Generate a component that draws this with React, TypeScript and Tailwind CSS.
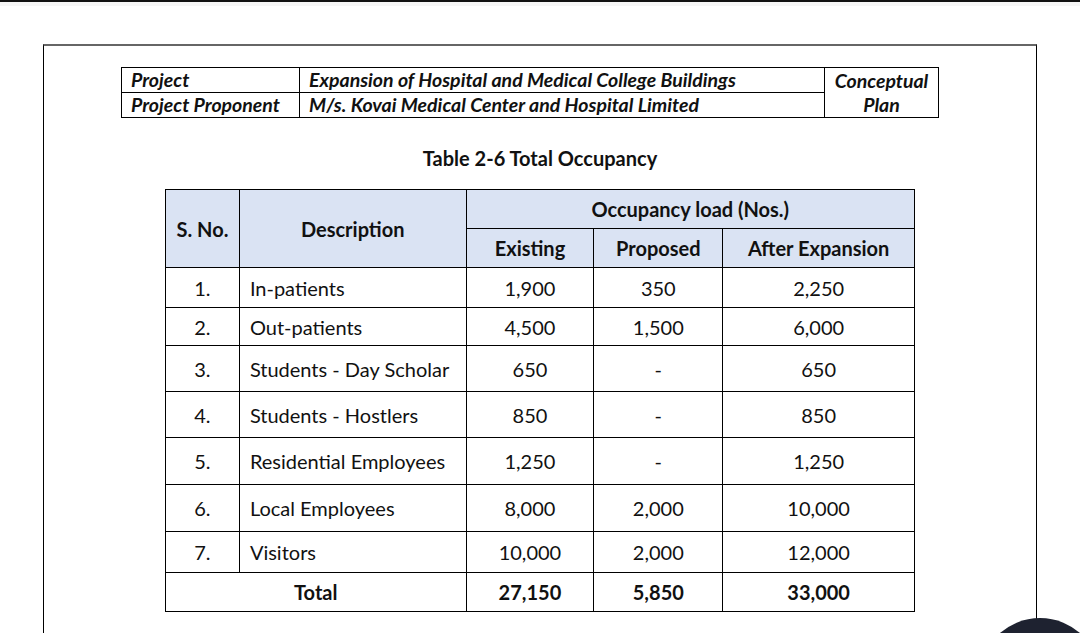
import React from "react";

type Row = {
  no: string;
  desc: string;
  existing: string;
  proposed: string;
  after: string;
  h: string;
};

const rows: Row[] = [
  { no: "1.", desc: "In-patients", existing: "1,900", proposed: "350", after: "2,250", h: "h-[40px]" },
  { no: "2.", desc: "Out-patients", existing: "4,500", proposed: "1,500", after: "6,000", h: "h-[38px]" },
  { no: "3.", desc: "Students - Day Scholar", existing: "650", proposed: "-", after: "650", h: "h-[46px]" },
  { no: "4.", desc: "Students - Hostlers", existing: "850", proposed: "-", after: "850", h: "h-[46px]" },
  { no: "5.", desc: "Residential Employees", existing: "1,250", proposed: "-", after: "1,250", h: "h-[47px]" },
  { no: "6.", desc: "Local Employees", existing: "8,000", proposed: "2,000", after: "10,000", h: "h-[47px]" },
  { no: "7.", desc: "Visitors", existing: "10,000", proposed: "2,000", after: "12,000", h: "h-[41px]" },
];

const cell = "border border-black p-0 align-middle";

export default function App() {
  return (
    <div
      className="relative w-[1080px] h-[633px] overflow-hidden bg-white text-[#111]"
      style={{ fontFamily: "Lato, 'Open Sans', sans-serif" }}
    >
      <div className="h-[6px] border-t-[2px] border-[#111] bg-[#f6f6f6]" />

      <div className="ml-[43px] mt-[38px] w-[994px] h-[700px] border-t-[2px] border-t-[#666] border-x border-x-black">
        {/* project header */}
        <table className="ml-[77px] mt-[21px] w-[818px] border-collapse text-[19.5px] font-bold italic leading-none">
          <tbody>
            <tr className="h-[25px]">
              <td className={`${cell} w-[178px] pl-[9px]`}>Project</td>
              <td className={`${cell} w-[525px] pl-[9px]`}>
                Expansion of Hospital and Medical College Buildings
              </td>
              <td rowSpan={2} className={`${cell} text-center leading-[24px]`}>
                Conceptual
                <br />
                Plan
              </td>
            </tr>
            <tr className="h-[25px]">
              <td className={`${cell} pl-[9px]`}>Project Proponent</td>
              <td className={`${cell} pl-[9px]`}>
                M/s. Kovai Medical Center and Hospital Limited
              </td>
            </tr>
          </tbody>
        </table>

        <div className="mt-[30px] text-center text-[20px] font-bold leading-none">
          Table 2-6 Total Occupancy
        </div>

        {/* occupancy table */}
        <table className="mx-auto mt-[21px] w-[750px] border-collapse text-center text-[20px] leading-none">
          <thead>
            <tr className="h-[39px] bg-[#dae3f3]">
              <th rowSpan={2} className={`${cell} w-[74px] font-bold`}>
                S. No.
              </th>
              <th rowSpan={2} className={`${cell} w-[227px] font-bold`}>
                Description
              </th>
              <th colSpan={3} className={`${cell} font-bold`}>
                Occupancy load (Nos.)
              </th>
            </tr>
            <tr className="h-[39px] bg-[#dae3f3]">
              <th className={`${cell} w-[128px] font-bold`}>Existing</th>
              <th className={`${cell} w-[129px] font-bold`}>Proposed</th>
              <th className={`${cell} w-[192px] font-bold`}>After Expansion</th>
            </tr>
          </thead>
          <tbody>
            {rows.map((r) => (
              <tr key={r.no} className={r.h}>
                <td className={cell}>{r.no}</td>
                <td className={`${cell} pl-[10px] text-left`}>{r.desc}</td>
                <td className={cell}>{r.existing}</td>
                <td className={cell}>{r.proposed}</td>
                <td className={cell}>{r.after}</td>
              </tr>
            ))}
            <tr className="h-[39px] font-bold">
              <td colSpan={2} className={cell}>
                Total
              </td>
              <td className={cell}>27,150</td>
              <td className={cell}>5,850</td>
              <td className={cell}>33,000</td>
            </tr>
          </tbody>
        </table>
      </div>

      {/* floating button peeking in at the corner */}
      <div className="absolute left-[979px] top-[618px] h-[122px] w-[122px] rounded-full bg-[#1e2230]" />
    </div>
  );
}
